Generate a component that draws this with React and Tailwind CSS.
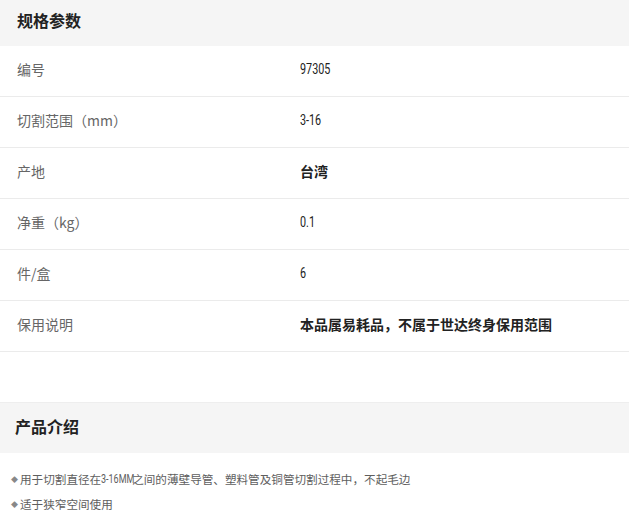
import React from "react";

const specs = [
  { label: "编号", value: "97305", num: true },
  { label: "切割范围（mm）", value: "3-16", num: true },
  { label: "产地", value: "台湾", bold: true },
  { label: "净重（kg）", value: "0.1", num: true },
  { label: "件/盒", value: "6", num: true },
  { label: "保用说明", value: "本品属易耗品，不属于世达终身保用范围", bold: true },
];

const intro = [
  ["用于切割直径在", "3-16MM", "之间的薄壁导管、塑料管及铜管切割过程中，不起毛边"],
  ["适于狭窄空间使用"],
];

function Narrow({ children, className = "" }) {
  return (
    <span className={`inline-block origin-left scale-x-[0.72] font-['Roboto',sans-serif] ${className}`}>
      {children}
    </span>
  );
}

export default function App() {
  return (
    <div className="w-[629px] h-[528px] overflow-hidden bg-white font-['Noto_Sans_CJK_SC','Noto_Sans',sans-serif]">
      {/* 规格参数 */}
      <div className="h-[46px] bg-[#f5f5f5] flex items-center px-[17px] pb-[7px]">
        <h2 className="text-[16px] font-bold text-[#222]">规格参数</h2>
      </div>
      <div>
        {specs.map((row) => (
          <div key={row.label} className="h-[51px] flex items-center pb-[3px] border-b border-[#ebebeb]">
            <div className="w-[300px] pl-[17px] text-[14px] text-[#666]">{row.label}</div>
            <div className={`text-[14px] text-[#222] ${row.bold ? "font-bold" : ""}`}>
              {row.num ? <Narrow className="text-[15px]">{row.value}</Narrow> : row.value}
            </div>
          </div>
        ))}
      </div>

      <div className="h-[50px]" />

      {/* 产品介绍 */}
      <div className="h-[51px] bg-[#f5f5f5] border-t border-[#eeeeee] flex items-center px-[15px] pb-[5px]">
        <h2 className="text-[16px] font-bold text-[#222]">产品介绍</h2>
      </div>
      <div className="pt-[14px] pl-[11px] text-[11.6px] text-[#5e5e5e]">
        {intro.map((parts) => (
          <div key={parts[0]} className="h-[25px] flex items-center whitespace-nowrap">
            <span className="text-[7px] text-[#888] mr-[2px] leading-none">◆</span>
            <span>{parts[0]}</span>
            {parts[1] && (
              <span className="inline-block w-[31px] overflow-visible">
                <Narrow className="text-[12.5px]">{parts[1]}</Narrow>
              </span>
            )}
            {parts[2] && <span>{parts[2]}</span>}
          </div>
        ))}
      </div>
    </div>
  );
}
